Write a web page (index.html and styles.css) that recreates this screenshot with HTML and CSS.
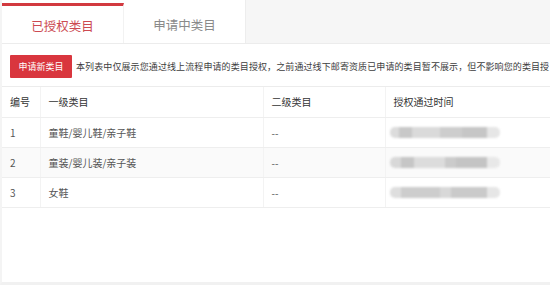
FILE: index.html
```html
<!DOCTYPE html>
<html lang="zh-CN">
<head>
  <meta charset="UTF-8" />
  <meta name="viewport" content="width=device-width, initial-scale=1.0" />
  <link rel="stylesheet" href="styles.css">
</head>
<body>
  <div class="page">
    <div class="tabs">
      <div class="tab active">已授权类目</div>
      <div class="tab">申请中类目</div>
      <div class="tab-rest"></div>
    </div>

    <div class="toolbar">
      <button class="btn-apply">申请新类目</button>
      <span class="notice">本列表中仅展示您通过线上流程申请的类目授权，之前通过线下邮寄资质已申请的类目暂不展示，但不影响您的类目授</span>
    </div>

    <table class="list">
      <thead>
        <tr>
          <th class="col-no">编号</th>
          <th class="col-first">一级类目</th>
          <th class="col-second">二级类目</th>
          <th>授权通过时间</th>
        </tr>
      </thead>
      <tbody>
        <tr>
          <td>1</td>
          <td>童鞋/婴儿鞋/亲子鞋</td>
          <td>--</td>
          <td><div class="blur b1"></div></td>
        </tr>
        <tr class="alt">
          <td>2</td>
          <td>童装/婴儿装/亲子装</td>
          <td>--</td>
          <td><div class="blur b2"></div></td>
        </tr>
        <tr>
          <td>3</td>
          <td>女鞋</td>
          <td>--</td>
          <td><div class="blur b3"></div></td>
        </tr>
      </tbody>
    </table>
  </div>
</body>
</html>
```

FILE: styles.css
```css
body {
  margin: 0;
  background: #fff;
  font-family: "Noto Sans CJK SC", "Liberation Sans", sans-serif;
  color: #444;
}
.page {
  width: 550px;
  height: 285px;
  overflow: hidden;
  border-left: 2px solid #f4f4f4;
  border-bottom: 3px solid #f1f1f1;
  box-sizing: border-box;
}
.tabs {
  display: flex;
  height: 44px;
  border-bottom: 1px solid #ececec;
  box-sizing: border-box;
}
.tab {
  width: 122px;
  display: flex;
  align-items: center;
  justify-content: center;
  padding-top: 6px;
  box-sizing: border-box;
  font-size: 12.5px;
  color: #8a8a8a;
  background: #fff;
  border-right: 1px solid #ededed;
}
.tab.active {
  color: #cc4a52;
  border-top: 3px solid #d2393f;
  margin-top: 3px;
  padding-top: 2px;
  border-right: 1px solid #f2f2f2;
}
.tab-rest {
  flex: 1;
  background: #f6f6f6;
}
.toolbar {
  display: flex;
  align-items: center;
  gap: 4px;
  padding: 11px 0 8px 8px;
  border-bottom: 1px solid #ececec;
  white-space: nowrap;
  overflow: hidden;
}
.btn-apply {
  flex: none;
  width: 62px;
  height: 23px;
  border: none;
  border-radius: 1px;
  background: #d9363e;
  color: #fff;
  font-family: inherit;
  font-size: 9px;
  padding: 0;
}
.notice {
  font-size: 9px;
  letter-spacing: 0.1px;
  color: #3d3d3d;
}
.list {
  width: 100%;
  border-collapse: collapse;
  font-size: 10px;
}
.list th,
.list td {
  height: 30px;
  padding: 0 0 0 8px;
  text-align: left;
  border-bottom: 1px solid #eeeeee;
  border-right: 1px solid #f3f3f3;
  box-sizing: border-box;
}
.list th:last-child,
.list td:last-child {
  border-right: none;
}
.list th {
  font-weight: normal;
  color: #333;
}
.list td {
  color: #555;
}
.list tr.alt td {
  background: #fafafa;
}
.col-no { width: 38px; }
.col-first { width: 223px; }
.col-second { width: 122px; }
.blur {
  width: 110px;
  height: 11px;
  margin-left: -4px;
  border-radius: 5px;
  filter: blur(1px);
}
.b1 {
  background: linear-gradient(90deg, #dcdcdc 0 8%, #c8c8c8 8% 20%, #dadada 20% 45%, #cdcdcd 45% 65%, #c6c6c6 65% 88%, #e6e6e6 88%);
}
.b2 {
  background: linear-gradient(90deg, #d8d8d8 0 10%, #c6c6c6 10% 22%, #dcdcdc 22% 50%, #cbcbcb 50% 60%, #c4c4c4 60% 88%, #e8e8e8 88%);
}
.b3 {
  background: linear-gradient(90deg, #dedede 0 10%, #cdcdcd 10% 45%, #d8d8d8 45% 55%, #cacaca 55% 88%, #e6e6e6 88%);
}
```
